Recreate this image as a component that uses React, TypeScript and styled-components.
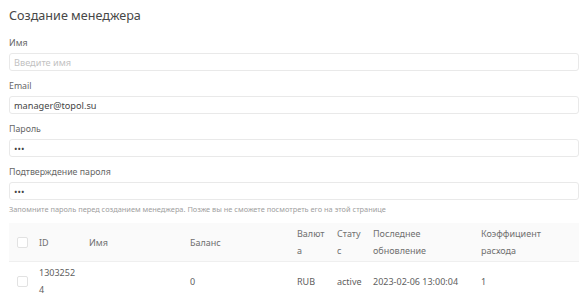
import React from "react";
import styled, { createGlobalStyle } from "styled-components";

const GlobalStyle = createGlobalStyle`
  html, body { margin: 0; padding: 0; background: #fff; }
  body { font-family: "Noto Sans", "Open Sans", sans-serif; color: #444; }
  * { box-sizing: border-box; }
`;

const Page = styled.div`
  padding: 7px 8px 0 9px;
  width: 587px;
`;

const Title = styled.h1`
  margin: 0 0 12px;
  font-size: 12.6px;
  line-height: 18px;
  font-weight: 400;
  color: #474747;
`;

const Field = styled.div`
  display: flex;
  flex-direction: column;
  gap: 3px;
  margin-bottom: 9px;
`;

const Label = styled.label`
  font-size: 8.8px;
  line-height: 13px;
  color: #666;
`;

const Input = styled.input`
  height: 18px;
  width: 100%;
  border: 1px solid #e9e9e9;
  border-radius: 3px;
  padding: 0 4px;
  font-family: inherit;
  font-size: 9.2px;
  color: #444;
  outline: none;
  background: #fff;
  &::placeholder { color: #c2c2c2; }
`;

const Help = styled.div`
  margin-top: -6px;
  font-size: 7.4px;
  line-height: 12px;
  color: #a0a0a0;
`;

const Table = styled.table`
  margin-top: 8px;
  width: 570px;
  table-layout: fixed;
  border-collapse: collapse;
  font-size: 9px;
`;

const HeadRow = styled.tr`
  background: #fafafa;
  color: #707070;
`;

const BodyRow = styled.tr`
  color: #606060;
  border-top: 1px solid #efefef;
`;

const Cell = styled.td<{ $check?: boolean }>`
  padding: ${(p) => (p.$check ? "2px 0 2px 8px" : "2px 4px 2px 6px")};
  line-height: 17px;
  vertical-align: middle;
  text-align: left;
  font-weight: 400;
  word-break: break-word;
  overflow-wrap: anywhere;
`;

const Box = styled.span`
  display: block;
  width: 11px;
  height: 11px;
  border: 1px solid #e2e2e2;
  border-radius: 2px;
  background: #fff;
`;

const widths = [24, 50, 101, 107, 40, 36, 108, 104];

export default function App() {
  return (
    <Page>
      <GlobalStyle />
      <Title>Создание менеджера</Title>
      <Field>
        <Label>Имя</Label>
        <Input placeholder="Введите имя" />
      </Field>
      <Field>
        <Label>Email</Label>
        <Input defaultValue="manager@topol.su" />
      </Field>
      <Field>
        <Label>Пароль</Label>
        <Input type="password" defaultValue="123" />
      </Field>
      <Field>
        <Label>Подтверждение пароля</Label>
        <Input type="password" defaultValue="123" />
      </Field>
      <Help>
        Запомните пароль перед созданием менеджера. Позже вы не сможете посмотреть его на этой странице
      </Help>
      <Table>
        <colgroup>
          {widths.map((w, i) => (
            <col key={i} style={{ width: w }} />
          ))}
        </colgroup>
        <thead>
          <HeadRow>
            <Cell as="th" $check><Box /></Cell>
            <Cell as="th">ID</Cell>
            <Cell as="th">Имя</Cell>
            <Cell as="th">Баланс</Cell>
            <Cell as="th">Валюта</Cell>
            <Cell as="th">Статус</Cell>
            <Cell as="th">Последнее обновление</Cell>
            <Cell as="th">Коэффициент расхода</Cell>
          </HeadRow>
        </thead>
        <tbody>
          <BodyRow>
            <Cell $check><Box /></Cell>
            <Cell>13032524</Cell>
            <Cell></Cell>
            <Cell>0</Cell>
            <Cell>RUB</Cell>
            <Cell>active</Cell>
            <Cell>2023-02-06 13:00:04</Cell>
            <Cell>1</Cell>
          </BodyRow>
        </tbody>
      </Table>
    </Page>
  );
}
